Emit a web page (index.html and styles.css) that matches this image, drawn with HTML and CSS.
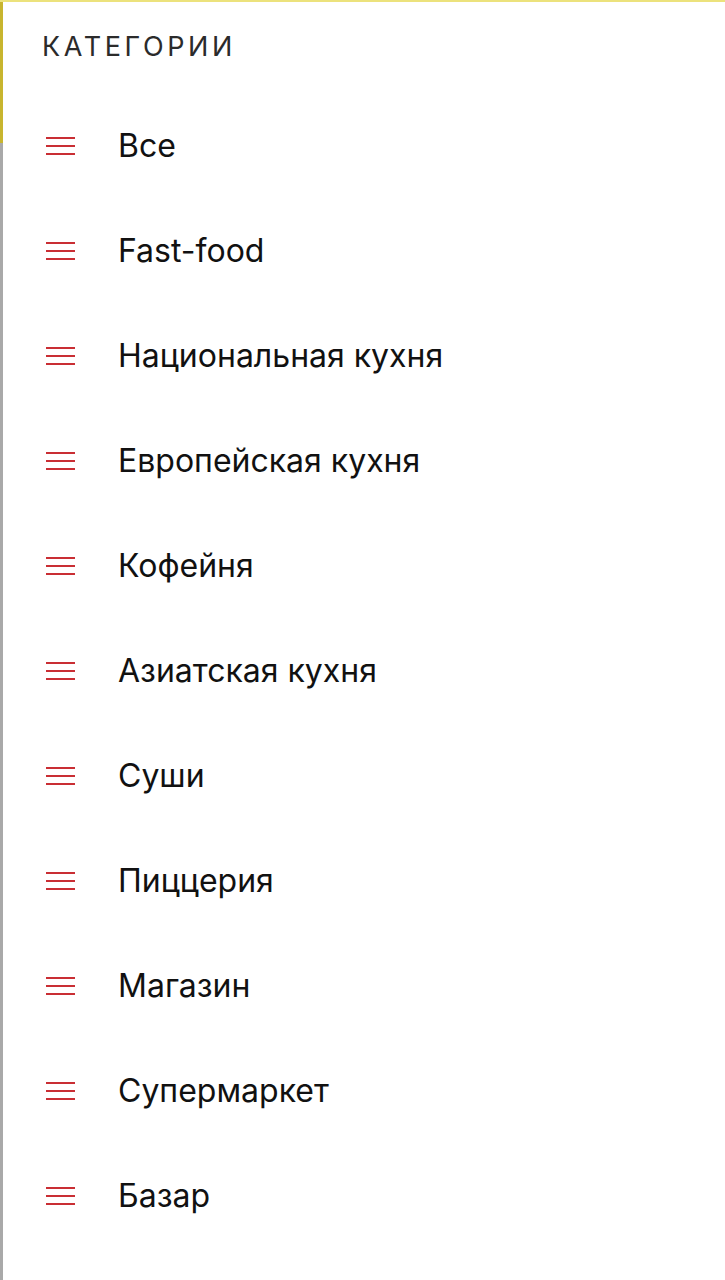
FILE: index.html
```html
<!DOCTYPE html>
<html lang="ru">
<head>
  <meta charset="UTF-8">
  <title>Категории</title>
  <meta name="viewport" content="width=device-width, initial-scale=1.0">
  <link rel="stylesheet" href="styles.css">
</head>
<body>
  <div class="drawer">
    <h1 class="title">Категории</h1>

    <ul class="categories">
      <li class="category"><span class="menu-icon"><i></i><i></i><i></i></span>Все</li>
      <li class="category"><span class="menu-icon"><i></i><i></i><i></i></span>Fast-food</li>
      <li class="category"><span class="menu-icon"><i></i><i></i><i></i></span>Национальная кухня</li>
      <li class="category"><span class="menu-icon"><i></i><i></i><i></i></span>Европейская кухня</li>
      <li class="category"><span class="menu-icon"><i></i><i></i><i></i></span>Кофейня</li>
      <li class="category"><span class="menu-icon"><i></i><i></i><i></i></span>Азиатская кухня</li>
      <li class="category"><span class="menu-icon"><i></i><i></i><i></i></span>Суши</li>
      <li class="category"><span class="menu-icon"><i></i><i></i><i></i></span>Пиццерия</li>
      <li class="category"><span class="menu-icon"><i></i><i></i><i></i></span>Магазин</li>
      <li class="category"><span class="menu-icon"><i></i><i></i><i></i></span>Супермаркет</li>
      <li class="category"><span class="menu-icon"><i></i><i></i><i></i></span>Базар</li>
    </ul>
  </div>
</body>
</html>
```

FILE: styles.css
```css
body {
  margin: 0;
  background: #fff;
  font-family: 'Inter', 'Roboto', sans-serif;
  color: #111;
}

.drawer {
  min-height: 1280px;
  box-sizing: border-box;
  padding-left: 3px;
  border-top: 2px solid #ece27c;
  background: linear-gradient(#c8b52e 0 141px, #a9a9a9 141px) no-repeat left top / 3px 100%;
}

.title {
  margin: 0;
  padding: 28px 0 0 39px;
  height: 63px;
  font-size: 27px;
  font-weight: 400;
  letter-spacing: 3.6px;
  text-transform: uppercase;
  color: #2b2b2b;
}

.categories {
  list-style: none;
  margin: 0;
  padding: 0;
}

.category {
  display: flex;
  align-items: center;
  height: 105px;
  font-size: 32px;
}

.menu-icon {
  display: flex;
  flex-direction: column;
  gap: 6px;
  width: 29px;
  margin: 0 43px;
}

.menu-icon i {
  display: block;
  height: 2px;
  background: #c92e34;
}
```
